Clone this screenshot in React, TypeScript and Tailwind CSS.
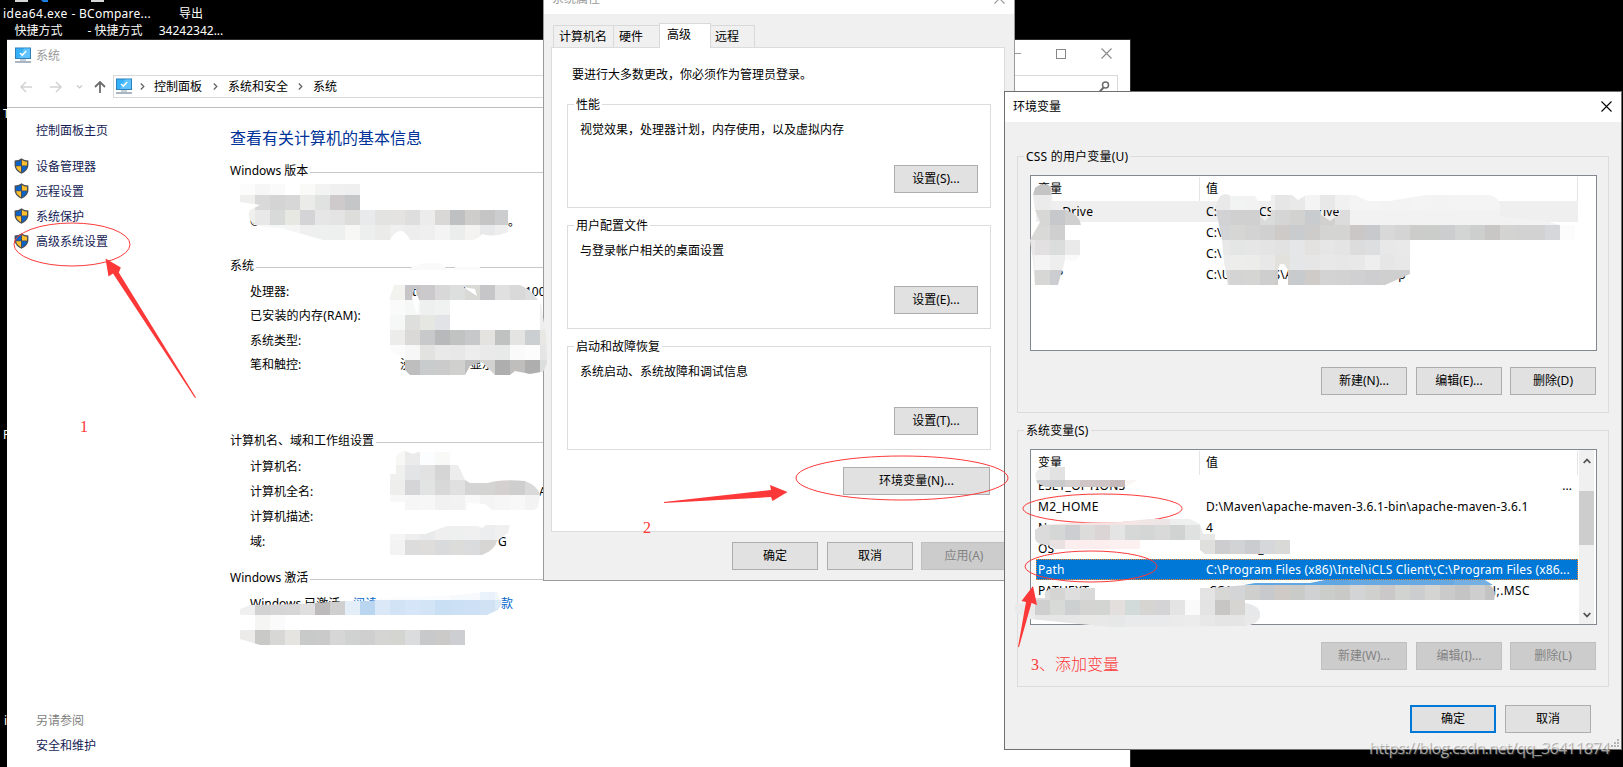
import React from "react";
import clsx from "clsx";

interface Strip {
  x: number;
  y: number;
  h?: number;
  colors: string;
}

interface Mosaic {
  id: string;
  clip: string;
  strips: Strip[];
}

interface VariableRow {
  name: string;
  value: string;
  state?: "hover" | "selected";
  valueClassName?: string;
}

const CELL = 15;

const mosaics: Mosaic[] = [
  {
    id: "edition",
    clip: "M240 184H360V210H508V232Q495 238 482 234Q478 240 470 240H410Q403 226 394 234L390 240H323L285 229L258 226Q245 220 250 210L260 205L240 202Z",
    strips: [
      { x: 240, y: 184, h: 11, colors: "#fcfcfc #f6f6f6 #fafafa #ffffff #fafaf8 #f3f3f3 #f0f0f0 #efefef" },
      { x: 240, y: 195, colors: "#efefed #d9d9d9 #d4d4d4 #d7d7d7 #ebebe9 #e0e2e1 #cecacc #c5c6c8" },
      { x: 240, y: 210, colors: "#f0f0ee #e8e8e8 #d7dad9 #e8e8e3 #d4d4d7 #e6e6e6 #e4e4e4 #dddddb #e8eaec #e3e3e1 #e4e3e1 #dedede #ececec #dad8d6 #bfc0c2 #cfcdcb #c5c5c6 #cccdcf" },
      { x: 240, y: 225, colors: "#f5f5f5 #f8f8f8 #f5f8f6 #f5f5f5 #efefef #eeefef #eef0f0 #f7f8f5 #edefef #ebebe9 #f0f0f0 #ededed #efefef #f4f4f4 #ebedec #f4f3f1 #e8e9eb #eeeeee" },
    ],
  },
  {
    id: "hardware",
    clip: "M394 285H520Q532 290 538 300L541 305L546 335L547 362Q545 372 541 372L530 374L515 371L510 375H495L482 362L470 366L465 375H410L405 370V358Q390 355 390 345V297ZM415 287L412 298L417 315L419 300ZM463 287L477 296L475 289Z",
    strips: [
      { x: 390, y: 285, colors: "#f2f3ee #c7c5c7 #cbc9cb #d8d8d8 #dddfdf #d9dad5 #c6c6c8 #dfe0df #d9d9d9 #dedede" },
      { x: 390, y: 300, colors: "#f9faf9 #f6f7f7 #eef0f0 #f0f1f1 #ffffff #ffffff #ffffff #ffffff #ffffff #ffffff #eeeeee" },
      { x: 390, y: 315, colors: "#f6f7f7 #dededc #e6e6e3 #e2e3e6 #ffffff #ffffff #ffffff #ffffff #ffffff #ffffff #eeeeee" },
      { x: 390, y: 330, colors: "#ececea #dbd9d7 #c7c9cb #b7b9bb #c1c3c2 #c6c8ca #e5e3e0 #c0c2c1 #e4e4e2 #cccfd1 #e8e7e3" },
      { x: 390, y: 345, colors: "#fbfbfb #f7f7f7 #e2e2e0 #e9e9e9 #e8e8e8 #ededed #eaeaea #e8eae9 #fafafa #fcfcfc #e5e5e5" },
      { x: 405, y: 360, colors: "#bebebe #c8cccc #cbcbcb #d0d0ce #bebebe #d2d2d0 #aeaeae #c0bebd #aeaeae #dcdedd" },
    ],
  },
  {
    id: "rule",
    clip: "M407 270Q418 263 428 263H440L448 270ZM455 267H480V270H455Z",
    strips: [{ x: 405, y: 262, h: 8, colors: "#fafafa #fafafa #fafafa #fafafa #fafafa" }],
  },
  {
    id: "computer",
    clip: "M405 451L413 454L418 452H450V465H458L465 480L470 483H488Q500 479 525 481Q538 486 540 495L538 507L534 510H492L485 504L467 503V510H405V502H390V474H396V458Q398 452 405 451Z",
    strips: [
      { x: 390, y: 450, colors: "#f7f7f5 #ebebeb #fbfdfe #f9f9f7" },
      { x: 390, y: 465, colors: "#f0f0ee #e2e4e5 #e2e2e2 #d5d5d5 #ededed" },
      { x: 390, y: 480, colors: "#eeeeec #d5d5d7 #e2e4e3 #d8d8d8 #e0e0e0 #d4d4d4 #d4d4d3 #d4d0d0 #cfcecf #d9d9d9" },
      { x: 390, y: 495, colors: "#f8f8f8 #f6f6f6 #f7f7f7 #f1f1f1 #f2f2f2 #f9f9f9 #f4f4f4 #f6f6f6 #f8f8f8 #f3f3f3" },
    ],
  },
  {
    id: "domain",
    clip: "M390 534H425L447 526H478L482 528L486 525H510L508 533L497 541Q495 550 482 555H390Z",
    strips: [
      { x: 390, y: 525, colors: "#f5f5f5 #eeeeee #e9eaeb #efeff0 #eeefef #f0f0f0 #ecedee #f0f0f0" },
      { x: 390, y: 540, colors: "#f3f3f3 #dcdcdc #dfdddc #d8dadc #dcdcda #dadbdd #d8d6d5 #d8d6d5" },
    ],
  },
  {
    id: "activation",
    clip: "M240 609L250 605L300 604L345 601H370L388 598L460 595L483 592H497L502 603L498 610L487 615H285V630H465V645H260L240 639V630H255V615H240Z",
    strips: [
      { x: 375, y: 592, h: 8, colors: "#fafcfe #fafcfe #fafcfe #fafcfe #fafcfe #f6fafd #f6fafd #e9f2fb #f1f6fc" },
      { x: 240, y: 600, colors: "#f0f0f0 #d2d2d2 #d5d5d5 #d6d6d6 #dfdfdf #bdbabb #cfcfd0 #e4eef8 #bad5f0 #dbe8f7 #d3e3f6 #d6e5f7 #d3e4f6 #c9dff4 #cbe0f5 #cde0f5 #d1e2f5 #dceaf8" },
      { x: 255, y: 615, colors: "#f5f5f3 #fbfbfb" },
      { x: 240, y: 630, colors: "#ecebea #c9c9c8 #d7d7d5 #e5e4e1 #c8caca #c9cac9 #d6d6d6 #cfd2d1 #cfcfcf #d5d5d3 #d4d4d1 #dbdcde #c7c9cb #cbcac9 #cdced1" },
    ],
  },
  {
    id: "user-names",
    clip: "M1035 188Q1043 181 1051 187L1053 205L1066 210Q1080 215 1081 225H1065V240H1080V255L1075 261L1065 260L1058 285H1035L1033 262L1030 240L1040 222L1035 210L1033 195Z",
    strips: [
      { x: 1020, y: 180, colors: "#c4c4c4 #c4c4c4 #cccccc" },
      { x: 1020, y: 195, colors: "#ebebeb #ebebeb #eeeeee #eeeeee" },
      { x: 1020, y: 210, colors: "#d7d7d5 #d7d7d5 #c6c8cb #d0d0d0 #d0d0d0" },
      { x: 1020, y: 225, colors: "#d9d9d8 #d9d9d8 #cfcfd0" },
      { x: 1020, y: 240, colors: "#e8e8e8 #e2e0e1 #dbdddc #eaeaea" },
      { x: 1020, y: 255, colors: "#f0f0f0 #f4f4f4 #eeeeee #fafafa" },
      { x: 1020, y: 270, colors: "#e0e0e0 #d7d7d5 #cbcdd0" },
    ],
  },
  {
    id: "user-values",
    clip: "M1216 207Q1218 194 1225 194L1232 196H1255L1260 205V216L1265 221L1271 215V195H1292L1298 200L1306 195H1355L1368 201H1390L1425 195H1490Q1500 198 1500 206V217L1545 221L1560 225H1575V240H1410V274L1385 285H1288V270L1284 264H1280L1278 270V285H1228L1224 262L1222 240L1216 210ZM1320 210H1340V214L1330 221L1320 214Z",
    strips: [
      { x: 1215, y: 194, h: 16, colors: "#e9e9e9 #f1f4f3 #f2f2f2 #f0f0f0 #e6e6e6 #e9e9e9 #f4f4f4 #e8e8e8 #f1f1f1 #f4f4f4 #f4f4f4 #f3f3f3 #f3f3f3 #f4f4f4 #f3f3f3 #f3f3f3 #f4f4f4 #f4f4f4 #f4f4f4" },
      { x: 1215, y: 210, colors: "#d2d2d4 #cfd0cf #cfd0cf #d9dada #d4d5d4 #d2d2d0 #c9ccce #d2d0ce #dcdcdc #f2f2f2 #f2f2f2 #f2f2f2 #f2f2f2 #f2f2f2 #f2f2f2 #f2f2f2 #f2f2f2 #f2f2f2 #f2f2f2 #f2f2f2 #f2f2f2 #f2f2f2 #f2f2f2" },
      { x: 1215, y: 225, colors: "#d3d4d6 #d6d6d4 #d3d3d3 #d0d0d0 #cdcac8 #c9cccf #cdccca #d4d4d2 #d4d4d2 #cbc7c7 #c8c9cd #d8d8d8 #d4d4d4 #cccdca #cbcdcb #cccdcf #d3d4d4 #cccfcd #c8c7c6 #d3d3d2 #d2d2d2 #d2d2d2 #d6d7da #fcfcfc" },
      { x: 1215, y: 240, colors: "#e8e8e8 #e4e6e5 #e6e6e6 #e4e4e4 #e3e2e3 #e4e6e8 #e4e2e0 #e6e6e6 #e4e4e4 #dcdcdc #dcdee0 #e8e8e8 #e9e9e9" },
      { x: 1215, y: 255, colors: "#ececec #ededeb #ececea #e8e8e8 #e2e1dc #e4e6e8 #e6e6e6 #e8e8e8 #e7e7e7 #e8e8e8 #eeeeee #e6e6e6 #e8e8e8" },
      { x: 1215, y: 270, colors: "#d8d8d8 #d4d4d4 #d5d5d3 #cecece #cecac7 #c8cbcd #cecbc9 #d2d3d2 #d2d2d2 #d0d0d2 #ceced0 #d0cfcf #cfcfd0" },
    ],
  },
  {
    id: "system-top",
    clip: "M1035 474Q1038 467 1046 467H1065V480H1138L1125 487H1045L1037 483Z",
    strips: [
      { x: 1035, y: 465, colors: "#ececec #e2e2e2" },
      { x: 1035, y: 480, colors: "#cdced1 #c9cacb #d5cfcf #d0c6c6 #cfc5c5 #c5b9ba #faf6f6" },
    ],
  },
  {
    id: "system-middle",
    clip: "M1042 525L1070 523L1120 522L1150 519H1190L1200 524L1203 534H1215V540H1290V554H1205L1200 550V540H1140V549H1055L1048 545Q1035 545 1035 537V530Z",
    strips: [
      { x: 1035, y: 519, h: 6, colors: "#efe6e6 #f5e6e6 #f5e6e6 #f5e6e6 #f5e3e3 #f5e3e3 #f5e6e6 #f0e6e6 #eee6e6 #eeeeee #efefef" },
      { x: 1035, y: 525, colors: "#dadbda #d5d7d6 #cdced1 #dcdddb #dbd5d5 #e4e4e4 #d6d8d7 #d4d6d5 #d8d9d8 #d1d2d2 #dfe1e0 #e8e8e8" },
      { x: 1035, y: 540, colors: "#dcdcdc #eae2e2 #fceeee #fceeee #fceeee #fdf0f0 #fdf0f0 #ffffff #ffffff #ffffff #ffffff #dfdfde #cdcdcf #d2d3d4 #cbcccf #d6d7da #d9dad8 #eeeeee" },
    ],
  },
  {
    id: "selection",
    clip: "M1244 585L1255 583H1310L1325 580H1485L1493 585Z",
    strips: [
      { x: 1244, y: 580, h: 5, colors: "#5fa6e2 #5fa6e2 #5fa6e2 #5fa6e2 #5fa6e2 #5fa6e2 #5fa6e2 #68a9e1 #68a9e1 #68a9e1 #68a9e1 #68a9e1 #68a9e1 #68a9e1 #76b0e3 #76b0e3 #76b0e3" },
    ],
  },
  {
    id: "system-bottom",
    clip: "M1045 592Q1050 588 1055 588H1095V600H1200V588H1213L1245 585H1490Q1497 590 1494 600H1245V603Q1262 606 1260 617Q1258 624 1245 626L1110 627L1030 619L1015 612V604H1035V598H1045Z",
    strips: [
      { x: 1035, y: 585, colors: "#dcdcdc #d5d6d4 #dedede #d9d9d9 #ffffff #ffffff #ffffff #ffffff #ffffff #ffffff #ffffff #e4e4e4 #d7d7d6 #d4d5d7 #cfcfce #c7c9cc #cfcac6 #c9cbc9 #d0d1d3 #cbcdca #c9c9c7 #d3d4d6 #d0d0ce #cac8c8 #d1d3d1 #cccdcf #d4d4d2 #c9cac9 #c4c4c4 #cecece #c4c3c3 #cdced0" },
      { x: 1005, y: 600, colors: "#eaeaea #eaeaea #d0cfcf #d8dad8 #cdd0d1 #d4d4d2 #d3d5d3 #e2dfdc #d3dada #d6d5d2 #d4d4d6 #e4e4e4 #fafafa #e3e3e3 #c8c6c5 #d6d5d2 #e6e8ea" },
      { x: 1020, y: 615, colors: "#ebebeb #e6e6e6 #e6e6e6 #e6e7e6 #e8e8e6 #e8e8e8 #e6e8e8 #e9eaeb #e9eaeb #e9eaeb #ebebeb #ececec #e8e8e8 #e5e5e5 #e5e5e5 #e9e9e9" },
    ],
  },
];

const MosaicPatch = ({ id, clip, strips }: Mosaic) => (
  <g clipPath={`url(#${id})`}>
    <clipPath id={id}>
      <path d={clip} clipRule="evenodd" />
    </clipPath>
    {strips.map((strip) =>
      strip.colors.split(" ").map((color, i) => (
        <rect
          key={`${strip.y}-${i}`}
          x={strip.x + i * CELL}
          y={strip.y}
          width={CELL}
          height={strip.h ?? CELL}
          fill={color}
          shapeRendering="crispEdges"
        />
      ))
    )}
  </g>
);

const MonitorIcon = () => (
  <svg className="h-4 w-4 shrink-0" viewBox="0 0 16 16">
    <rect x="0" y="0.5" width="16" height="11.5" fill="#2f7fb8" />
    <rect x="1" y="1.5" width="14" height="9.5" fill="#35b1fb" />
    <path d="M9 1.5h6v9.5H4z" fill="#5ec3ff" />
    <path d="M5 6l2.3 2.2L11.2 4" fill="none" stroke="#fff" strokeWidth="1.5" />
    <path d="M5 13h6" stroke="#8aa3b5" strokeWidth="1" />
    <path d="M0 15h16" stroke="#8795a8" strokeWidth="1.4" />
  </svg>
);

const ShieldIcon = () => (
  <svg className="-mt-0.5 h-4 w-[15px] shrink-0" viewBox="0 0 15 16">
    <path d="M7.5 0.2C5.5 1.8 3 2.4 0.6 2.4V7c0 4 3 7.2 6.9 8.8C11.4 14.2 14.4 11 14.4 7V2.4C12 2.4 9.5 1.8 7.5 0.2z" fill="#4b4f54" />
    <path d="M7 2C5.5 3 3.8 3.5 2 3.7V7.5H7z" fill="#0a63c9" />
    <path d="M8 2c1.5 1 3.2 1.5 5 1.7V7.5H8z" fill="#ffbe2e" />
    <path d="M2.1 8.3H7v5.9C4.5 13 2.5 11 2.1 8.3z" fill="#ffbe2e" />
    <path d="M12.9 8.3H8v5.9c2.5-1.2 4.5-3.2 4.9-5.9z" fill="#0a63c9" />
  </svg>
);

const Chevron = ({ className }: { className?: string }) => (
  <svg className={clsx("h-[7px] w-[5px] shrink-0", className)} viewBox="0 0 5 7">
    <path d="M0.8 0.5L3.8 3.5L0.8 6.5" fill="none" stroke="#666" strokeWidth="1.3" />
  </svg>
);

const CloseIcon = ({ className }: { className?: string }) => (
  <svg className={clsx("h-[11px] w-[11px] shrink-0", className)} viewBox="0 0 11 11">
    <path d="M0.5 0.5l10 10M10.5 0.5l-10 10" stroke="currentColor" strokeWidth="1.1" />
  </svg>
);

interface ButtonProps {
  children: React.ReactNode;
  className?: string;
  disabled?: boolean;
  primary?: boolean;
}

const Button = ({ children, className, disabled, primary }: ButtonProps) => (
  <button
    disabled={disabled}
    className={clsx(
      "flex h-7 shrink-0 items-center justify-center whitespace-nowrap pb-px",
      disabled
        ? "border border-[#bfbfbf] bg-[#cccccc] text-[#838383]"
        : primary
          ? "border-2 border-[#0078d7] bg-[#e1e1e1]"
          : "border border-[#adadad] bg-[#e1e1e1]",
      className
    )}
  >
    {children}
  </button>
);

const SectionTitle = ({ children, className }: { children: React.ReactNode; className?: string }) => (
  <div className={clsx("flex h-5 items-center gap-0.5", className)}>
    <span>{children}</span>
    <span className="mt-[5px] h-px flex-1 bg-[#c8c8c8]" />
  </div>
);

const sidebarLinks = ["设备管理器", "远程设置", "系统保护", "高级系统设置"];

const SystemWindow = () => (
  <div className="absolute left-[7px] top-[39px] h-[728px] w-[1124px] overflow-hidden border-r border-t border-[#2b2b2b] bg-white">
    {/* Title bar */}
    <div className="flex h-[30px] items-center pl-2 pr-[18px]">
      <MonitorIcon />
      <span className="ml-[5px] text-[#999]">系统</span>
      <div className="mb-[3px] ml-auto flex items-center text-[#888]">
        <span className="h-px w-[11px] bg-[#999]" />
        <span className="ml-[35px] h-2.5 w-2.5 border border-[#888]" />
        <CloseIcon className="ml-[35px]" />
      </div>
    </div>

    {/* Navigation */}
    <div className="flex h-[38px] border-b border-[#bdbdbd] pt-[5px]">
      <div className="flex h-[23px] w-[106px] shrink-0 items-center pl-[13px]">
        <svg className="h-3 w-[87px]" viewBox="0 0 87 12" fill="none">
          <path d="M12 6H1M6 1L1 6l5 5" stroke="#d2d2d2" strokeWidth="1.5" />
          <path d="M30 6h11M36 1l5 5-5 5" stroke="#d2d2d2" strokeWidth="1.5" />
          <path d="M57 4.5l2.5 2.5L62 4.5" stroke="#c8c8c8" strokeWidth="1.2" />
          <path d="M80 12V1M75 6l5-5 5 5" stroke="#6d6d6d" strokeWidth="1.8" />
        </svg>
      </div>
      <div className="flex h-[23px] w-[740px] items-center border border-[#d9d9d9] pb-px pl-0.5">
        <MonitorIcon />
        <Chevron className="ml-2" />
        <span className="ml-[9px]">控制面板</span>
        <Chevron className="ml-[11px]" />
        <span className="ml-2.5">系统和安全</span>
        <Chevron className="ml-2.5" />
        <span className="ml-2.5">系统</span>
      </div>
      <div className="ml-3 mr-3 flex h-[23px] flex-1 items-center justify-end border border-[#d9d9d9] pr-[7px]">
        <svg className="h-3 w-3" viewBox="0 0 12 12" fill="none" stroke="#6d6d6d">
          <circle cx="7.5" cy="4" r="3" strokeWidth="1.5" />
          <path d="M5.5 6.5L1 11.5" strokeWidth="2" />
        </svg>
      </div>
    </div>

    <div className="flex">
      {/* Sidebar */}
      <div className="w-[223px] shrink-0 text-[#151c55]">
        <p className="mt-[13px] pl-[29px] leading-5">控制面板主页</p>
        <ul className="mt-[13px]">
          {sidebarLinks.map((label) => (
            <li key={label} className="flex h-[25px] items-center pl-[7px]">
              <ShieldIcon />
              <span className="ml-[7px]">{label}</span>
            </li>
          ))}
        </ul>
        <p className="mt-[454px] pl-[29px] leading-[25px] text-[#7f7f7f]">另请参阅</p>
        <p className="pl-[29px] leading-[25px]">安全和维护</p>
      </div>

      {/* Computer details */}
      <div className="w-[780px] shrink-0">
        <h1 className="mt-[18px] text-base leading-6 text-[#003399]">查看有关计算机的基本信息</h1>
        <SectionTitle className="mt-2.5">Windows 版本</SectionTitle>
        <div className="mt-[29px] flex h-6 w-[290px] items-center justify-between pl-5">
          <span>©</span>
          <span>利。</span>
        </div>
        <SectionTitle className="mt-[22px]">系统</SectionTitle>
        <dl className="mt-[5px] h-[98px] pl-5 leading-[24.3px]">
          <div className="flex">
            <dt className="w-[162px]">处理器:</dt>
            <dd className="w-[44px]">tel</dd>
            <dd className="w-[69px]">el</dd>
            <dd>100</dd>
          </div>
          <dt className="tracking-[0.2px]">已安装的内存(RAM):</dt>
          <dt>系统类型:</dt>
          <div className="flex">
            <dt className="w-[150px]">笔和触控:</dt>
            <dd className="w-[70px]">没</dd>
            <dd>显示</dd>
          </div>
        </dl>
        <SectionTitle className="mt-[52px]">计算机名、域和工作组设置</SectionTitle>
        <dl className="mt-1 pl-5 leading-[25px]">
          <dt>计算机名:</dt>
          <div className="flex">
            <dt className="w-[289px]">计算机全名:</dt>
            <dd>A</dd>
          </div>
          <dt>计算机描述:</dt>
          <div className="flex">
            <dt className="w-[248px]">域:</dt>
            <dd>G</dd>
          </div>
        </dl>
        <SectionTitle className="mt-[13px]">Windows 激活</SectionTitle>
        <div className="mt-1 flex h-[25px] items-center pl-5">
          <span className="w-[103px]">Windows 已激活</span>
          <span className="w-[148px] text-[#0066cc]">阅读 M</span>
          <span className="text-[#0066cc]">款</span>
        </div>
      </div>
    </div>
  </div>
);

const propertyGroups = [
  { title: "性能", text: "视觉效果，处理器计划，内存使用，以及虚拟内存", button: "设置(S)..." },
  { title: "用户配置文件", text: "与登录帐户相关的桌面设置", button: "设置(E)..." },
  { title: "启动和故障恢复", text: "系统启动、系统故障和调试信息", button: "设置(T)..." },
];

const PropertiesDialog = () => (
  <div className="absolute left-[543px] top-0 flex h-[581px] w-[472px] flex-col overflow-hidden border-x border-b border-[#9a9a9a] bg-[#f0f0f0]">
    <div className="flex h-3.5 shrink-0 items-start justify-between bg-white pl-2 pr-[9px] text-[#999]">
      <span className="-mt-2.5 leading-[18px]">系统属性</span>
      <CloseIcon className="-mt-[7px]" />
    </div>

    {/* Tabs */}
    <div className="flex h-[33px] shrink-0 items-end pl-[9px]">
      <span className="flex h-[22px] w-[60px] items-center border-l border-t border-[#d9d9d9] pl-[5px]">计算机名</span>
      <span className="flex h-[22px] w-[46px] items-center border-l border-t border-[#d9d9d9] pl-[5px]">硬件</span>
      <span className="z-10 -mb-px flex h-[25px] w-[52px] items-center border-x border-t border-[#d9d9d9] bg-white pb-[3px] pl-[7px]">高级</span>
      <span className="flex h-[22px] w-11 items-center border-r border-t border-[#d9d9d9] pl-1">远程</span>
    </div>

    <div className="ml-[7px] h-[485px] w-[454px] shrink-0 border border-[#dcdcdc] bg-white pl-[15px]">
      <p className="mt-[17px] pl-[5px] leading-5">要进行大多数更改，你必须作为管理员登录。</p>
      <div className="mt-[11px] flex flex-col gap-[9px]">
        {propertyGroups.map((group) => (
          <fieldset key={group.title} className="h-[112px] w-[424px] border border-[#dcdcdc]">
            <legend className="ml-1.5 px-0.5 leading-[17px]">{group.title}</legend>
            <p className="mt-[7px] pl-3 leading-5">{group.text}</p>
            <div className="mt-[25px] flex justify-end pr-3">
              <Button className="w-[84px]">{group.button}</Button>
            </div>
          </fieldset>
        ))}
      </div>
      <div className="mt-[17px] flex w-[423px] justify-end">
        <Button className="w-[147px] tracking-[0.1px]">环境变量(N)...</Button>
      </div>
    </div>

    <div className="mt-2.5 flex pl-[188px]">
      <Button className="w-[86px]">确定</Button>
      <Button className="ml-[9px] w-[86px]">取消</Button>
      <Button disabled className="ml-2 w-[86px]">应用(A)</Button>
    </div>
  </div>
);

const userRows: VariableRow[] = [
  { name: "OneDrive", value: "C:\\Users\\CSS\\OneDrive", state: "hover" },
  { name: "Path", value: "C:\\" },
  { name: "TEMP", value: "C:\\" },
  { name: "TMP", value: "C:\\Users\\CSS\\AppData\\Local\\Temp" },
];

const systemRows: VariableRow[] = [
  { name: "ESET_OPTIONS", value: "" },
  { name: "M2_HOME", value: "D:\\Maven\\apache-maven-3.6.1-bin\\apache-maven-3.6.1", valueClassName: "tracking-[0.2px]" },
  { name: "N", value: "4" },
  { name: "OS", value: "Windows_NT" },
  { name: "Path", value: "C:\\Program Files (x86)\\Intel\\iCLS Client\\;C:\\Program Files (x86...", state: "selected", valueClassName: "tracking-[0.16px]" },
  { name: "PATHEXT", value: ".COM;.EXE;.BAT;.CMD;.VBS;.VBE;.JS;.JSE;.WSF;.WSH;.MSC", valueClassName: "tracking-[0.35px]" },
];

const VariableList = ({ rows, scrollbar }: { rows: VariableRow[]; scrollbar?: boolean }) => (
  <div className="ml-3 mt-2.5 flex h-[176px] w-[567px] border border-[#828790] bg-white">
    <div className="w-[547px] shrink-0">
      <div className="flex h-[25px] items-center">
        <span className="flex h-6 w-[169px] items-center border-r border-[#e5e5e5] pl-[7px]">变量</span>
        <span className="flex h-6 flex-1 items-center border-r border-[#e5e5e5] pl-1.5">值</span>
      </div>
      {rows.map((row, index) => (
        <div
          key={index}
          className={clsx(
            "ml-[5px] flex h-[21px] items-center whitespace-nowrap",
            row.state === "hover" && "bg-[#efefef]",
            row.state === "selected" && "border border-dotted border-[#ff8728] bg-[#0078d7] text-white"
          )}
        >
          <span
            className={clsx(
              "shrink-0 tracking-[0.25px]",
              row.state === "selected" ? "w-[167px] pl-px" : "w-[168px] pl-0.5"
            )}
          >
            {row.name}
          </span>
          <span className={clsx("flex-1 pl-0.5", row.valueClassName ?? "tracking-[0.15px]")}>{row.value}</span>
          {row.name === "ESET_OPTIONS" && <span className="pr-1.5">...</span>}
        </div>
      ))}
    </div>
    {scrollbar && (
      <div className="ml-px flex w-[15px] flex-col items-center bg-[#f0f0f0]">
        <svg className="mt-2 h-1.5 w-2 shrink-0" viewBox="0 0 8 6">
          <path d="M0.7 5L4 1.5L7.3 5" fill="none" stroke="#505050" strokeWidth="1.8" />
        </svg>
        <div className="mt-[27px] h-[54px] w-full bg-[#cdcdcd]" />
        <svg className="mt-[67px] h-1.5 w-2 shrink-0" viewBox="0 0 8 6">
          <path d="M0.7 1L4 4.5L7.3 1" fill="none" stroke="#505050" strokeWidth="1.8" />
        </svg>
      </div>
    )}
  </div>
);

const EnvironmentDialog = () => (
  <div className="absolute left-[1004px] top-[91px] h-[659px] w-[618px] border border-[#6f6f6f] bg-[#f0f0f0]">
    <div className="flex h-[30px] items-center justify-between bg-white pb-0.5 pl-2 pr-[9px]">
      <span>环境变量</span>
      <CloseIcon />
    </div>

    <fieldset className="ml-3 mt-[26px] h-[265px] w-[592px] border border-[#dcdcdc]">
      <legend className="ml-1.5 px-0.5 leading-[17px] tracking-[0.2px]">CSS 的用户变量(U)</legend>
      <VariableList rows={userRows} />
      <div className="mt-4 flex justify-end pr-3">
        <Button className="w-[86px]">新建(N)...</Button>
        <Button className="ml-[9px] w-[86px]">编辑(E)...</Button>
        <Button className="ml-2 w-[86px]">删除(D)</Button>
      </div>
    </fieldset>

    <fieldset className="ml-3 mt-[9px] h-[265px] w-[592px] border border-[#dcdcdc]">
      <legend className="ml-1.5 px-0.5 leading-[17px] tracking-[0.1px]">系统变量(S)</legend>
      <VariableList rows={systemRows} scrollbar />
      <div className="mt-[17px] flex justify-end pr-3">
        <Button disabled className="w-[86px]">新建(W)...</Button>
        <Button disabled className="ml-[9px] w-[86px]">编辑(I)...</Button>
        <Button disabled className="ml-2 w-[86px]">删除(L)</Button>
      </div>
    </fieldset>

    <div className="mt-[18px] flex justify-end gap-[9px] pr-[30px]">
      <Button primary className="w-[86px]">确定</Button>
      <Button className="w-[86px]">取消</Button>
    </div>

    <svg className="absolute bottom-0.5 right-0.5 h-2 w-2" viewBox="0 0 8 8" fill="#b5b5b5">
      <path d="M6 0h2v2H6zM6 3h2v2H6zM3 3h2v2H3zM6 6h2v2H6zM3 6h2v2H3zM0 6h2v2H0z" />
    </svg>
  </div>
);

// Red ellipses, arrows and step numbers drawn over the windows
const Annotations = () => (
  <svg className="pointer-events-none absolute left-0 top-0 h-[767px] w-[1623px]" viewBox="0 0 1623 767">
    <g fill="none" stroke="#fd3a3a" strokeWidth="1">
      <ellipse cx="1102.5" cy="508.5" rx="79.5" ry="14.5" />
    </g>

    {mosaics.map((mosaic) => (
      <MosaicPatch key={mosaic.id} {...mosaic} />
    ))}

    <g fill="none" stroke="#fd3a3a" strokeWidth="1">
      <ellipse cx="72" cy="244.5" rx="58" ry="21.5" />
      <ellipse cx="902" cy="478" rx="106" ry="22" />
      <ellipse cx="1091" cy="566.5" rx="66" ry="15.5" />
    </g>

    <g fill="#fd3838">
      <path d="M105.5 258.5L120.8 267.5L118.8 272.5L196 397.5L195 398L113 273.5L108.5 276.5Z" />
      <path d="M664 502L771 490L770 485L787.5 492L772.5 501L771 497L664 503Z" />
      <path d="M1033 586L1037 605L1031.5 603L1019 647L1018 647L1026 602L1021.5 601Z" />
    </g>

    <g fill="#fd3838" className="text-base font-[Liberation_Serif,Noto_Sans_CJK_SC,serif]">
      <text x="80" y="432">1</text>
      <text x="643" y="533">2</text>
    </g>
  </svg>
);

const App = () => {
  return (
    <div className="relative h-[767px] w-[1623px] overflow-hidden bg-black font-['Noto_Sans','Noto_Sans_CJK_SC',sans-serif] text-[12px] leading-[17px] text-black">
      {/* Desktop shortcuts */}
      <div className="absolute left-[3px] top-[5px] flex whitespace-nowrap text-center text-white">
        <span className="w-[71px]"><span className="tracking-[0.45px]">idea64.exe -</span><br />快捷方式</span>
        <span className="ml-[5px] w-[72px]"><span className="tracking-[0.25px]">BCompare...</span><br />- 快捷方式</span>
        <span className="ml-[7px] w-[66px]">导出<br />34242342...</span>
      </div>
      <svg className="absolute left-0 top-0 h-0.5 w-[120px]" viewBox="0 0 120 2">
        <path d="M15 0h13v2H15zM91 0h13v2H91z" fill="#d6d6d6" />
        <path d="M41 0h7v2h-5z" fill="#1a7fe0" />
      </svg>
      <span className="absolute left-[3px] top-[105px] text-white">T</span>
      <span className="absolute left-[3px] top-[426px] text-white">P</span>
      <span className="absolute left-[4px] top-[712px] text-white">i</span>

      <SystemWindow />
      <PropertiesDialog />
      <EnvironmentDialog />
      <Annotations />

      <p className="absolute left-[1031px] top-[653px] whitespace-nowrap font-['Liberation_Serif','Noto_Sans_CJK_SC',serif] text-base font-light leading-6 text-[#fd3838]">
        3、添加变量
      </p>
      <p className="absolute left-[1369px] top-[738px] whitespace-nowrap font-['Open_Sans','Noto_Sans',sans-serif] text-base leading-5 tracking-[-0.6px] text-white/60 [text-shadow:1px_1px_1px_rgba(90,90,90,0.6)]">
        https://blog.csdn.net/qq_36411874
      </p>
    </div>
  );
};

export default App;
